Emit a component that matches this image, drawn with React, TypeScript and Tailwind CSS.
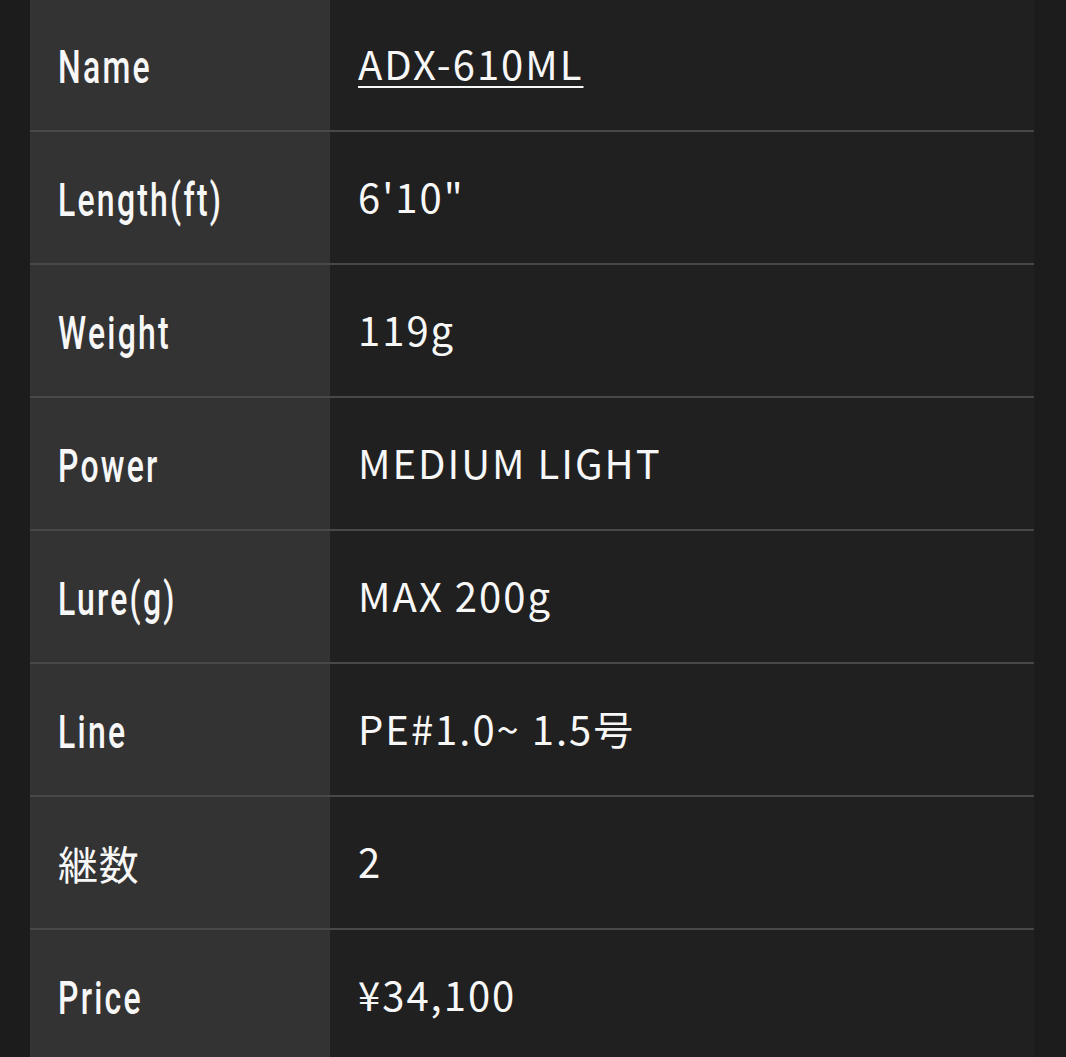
import React from 'react';

const SPECS: { label: string; value: string; link?: boolean; cjk?: boolean }[] = [
  { label: 'Name', value: 'ADX-610ML', link: true },
  { label: 'Length(ft)', value: '6\'10"' },
  { label: 'Weight', value: '119g' },
  { label: 'Power', value: 'MEDIUM LIGHT' },
  { label: 'Lure(g)', value: 'MAX 200g' },
  { label: 'Line', value: 'PE#1.0~ 1.5号' },
  { label: '継数', value: '2', cjk: true },
  { label: 'Price', value: '¥34,100' },
];

export default function App() {
  return (
    <div className="min-h-[1057px] w-full overflow-hidden bg-[#1c1c1c]">
      <div className="ml-[30px] mr-[32px] -mt-px bg-[#202020]">
        {SPECS.map((row) => (
          <div key={row.label} className="flex h-[133px] border-b-2 border-[#484848]">
            {/* label column - condensed look */}
            <div className="flex w-[300px] shrink-0 items-center bg-[#333333] pl-[28px]">
              {row.cjk ? (
                <span className="font-['Noto_Sans_CJK_JP',sans-serif] text-[40px] tracking-[0.02em] text-[#f7f7f7]">
                  {row.label}
                </span>
              ) : (
                <span className="inline-block origin-left scale-x-[0.68] whitespace-nowrap pt-[5px] font-['Roboto','Noto_Sans_CJK_JP',sans-serif] text-[47px] font-medium tracking-[0.07em] text-[#f7f7f7]">
                  {row.label}
                </span>
              )}
            </div>
            {/* value column */}
            <div className="flex flex-1 items-center pb-[3px] pl-[28px]">
              <span
                className={
                  "font-['Noto_Sans_CJK_JP',sans-serif] text-[40px] tracking-[0.05em] text-[#f7f7f7] " +
                  (row.link ? 'underline decoration-2 underline-offset-[6px]' : '')
                }
              >
                {row.value}
              </span>
            </div>
          </div>
        ))}
      </div>
    </div>
  );
}
